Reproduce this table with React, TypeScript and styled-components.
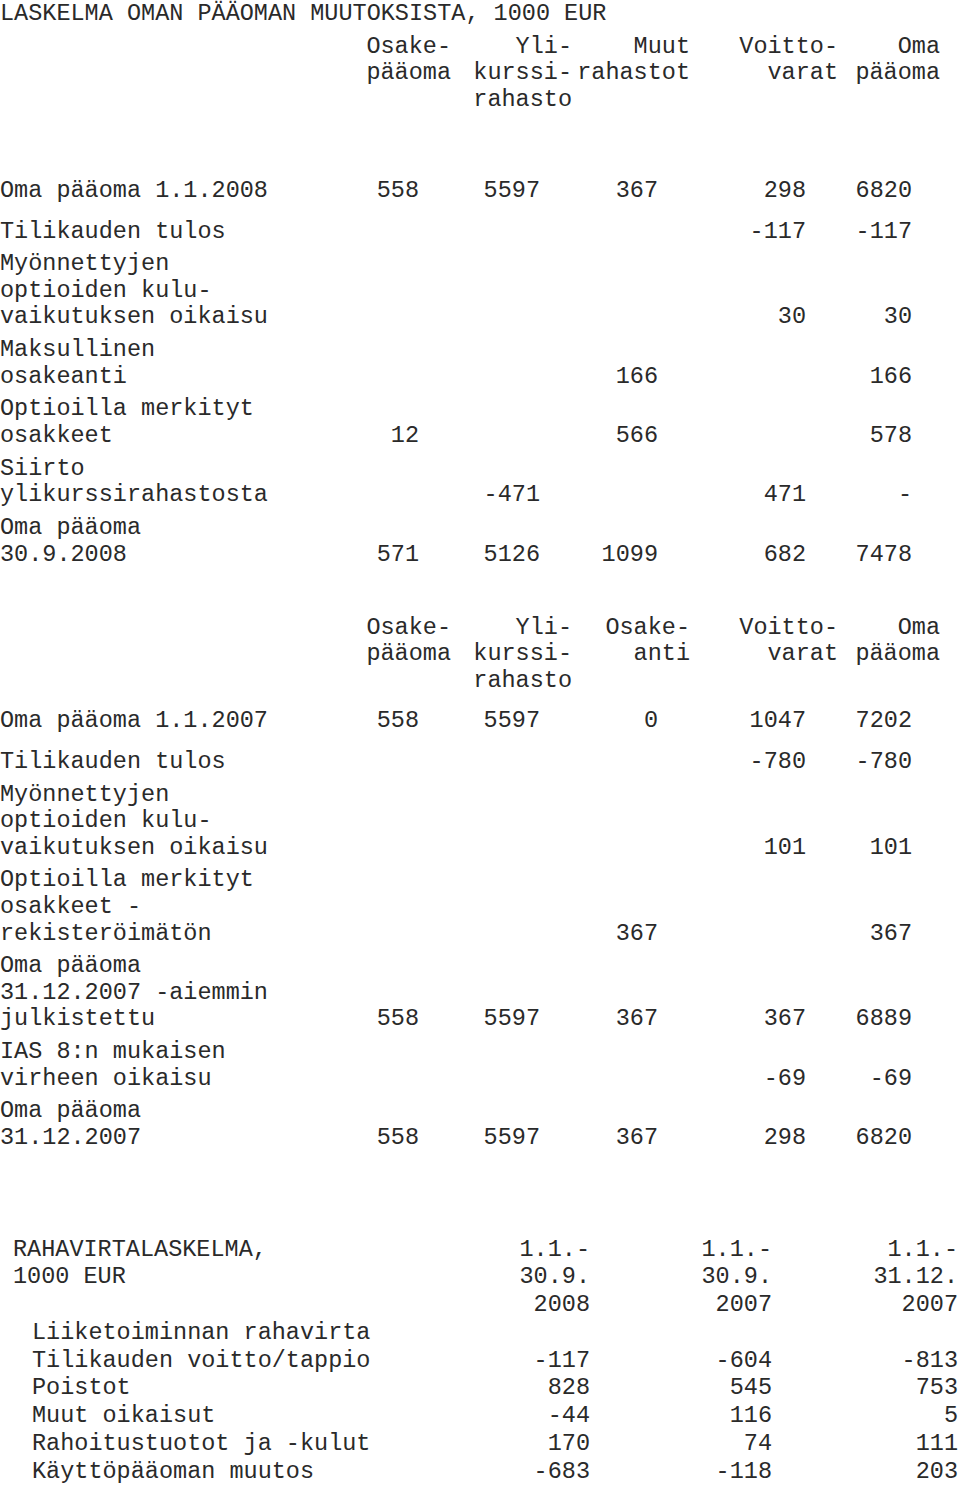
import { FC } from "react";
import styled, { createGlobalStyle } from "styled-components";

interface EquityRow {
  label: string;
  values: string[];
}

interface CashRow {
  label: string;
  values: string[];
}

const headers2008 = ["Osake-\npääoma", "Yli-\nkurssi-\nrahasto", "Muut\nrahastot", "Voitto-\nvarat", "Oma\npääoma"];
const headers2007 = ["Osake-\npääoma", "Yli-\nkurssi-\nrahasto", "Osake-\nanti", "Voitto-\nvarat", "Oma\npääoma"];

const rows2008: EquityRow[] = [
  { label: "Oma pääoma 1.1.2008", values: ["558", "5597", "367", "298", "6820"] },
  { label: "Tilikauden tulos", values: ["", "", "", "-117", "-117"] },
  { label: "Myönnettyjen\noptioiden kulu-\nvaikutuksen oikaisu", values: ["", "", "", "30", "30"] },
  { label: "Maksullinen\nosakeanti", values: ["", "", "166", "", "166"] },
  { label: "Optioilla merkityt\nosakkeet", values: ["12", "", "566", "", "578"] },
  { label: "Siirto\nylikurssirahastosta", values: ["", "-471", "", "471", "-"] },
  { label: "Oma pääoma\n30.9.2008", values: ["571", "5126", "1099", "682", "7478"] },
];

const rows2007: EquityRow[] = [
  { label: "Oma pääoma 1.1.2007", values: ["558", "5597", "0", "1047", "7202"] },
  { label: "Tilikauden tulos", values: ["", "", "", "-780", "-780"] },
  { label: "Myönnettyjen\noptioiden kulu-\nvaikutuksen oikaisu", values: ["", "", "", "101", "101"] },
  { label: "Optioilla merkityt\nosakkeet -\nrekisteröimätön", values: ["", "", "367", "", "367"] },
  { label: "Oma pääoma\n31.12.2007 -aiemmin\njulkistettu", values: ["558", "5597", "367", "367", "6889"] },
  { label: "IAS 8:n mukaisen\nvirheen oikaisu", values: ["", "", "", "-69", "-69"] },
  { label: "Oma pääoma\n31.12.2007", values: ["558", "5597", "367", "298", "6820"] },
];

const cashHeaders = ["1.1.-\n30.9.\n2008", "1.1.-\n30.9.\n2007", "1.1.-\n31.12.\n2007"];

const cashRows: CashRow[] = [
  { label: "Liiketoiminnan rahavirta", values: ["", "", ""] },
  { label: "Tilikauden voitto/tappio", values: ["-117", "-604", "-813"] },
  { label: "Poistot", values: ["828", "545", "753"] },
  { label: "Muut oikaisut", values: ["-44", "116", "5"] },
  { label: "Rahoitustuotot ja -kulut", values: ["170", "74", "111"] },
  { label: "Käyttöpääoman muutos", values: ["-683", "-118", "203"] },
];

interface TableProps {
  headers: string[];
  rows: EquityRow[];
  top: number;
  lead: number;
}

const EquityTable: FC<TableProps> = ({ headers, rows, top, lead }) => (
  <Table $top={top}>
    <HeadRow>
      <span />
      {headers.map((h, i) => (
        <HeadCell key={i}>{h}</HeadCell>
      ))}
    </HeadRow>
    {rows.map((r, i) => (
      <DataRow key={i} $gap={i === 0 ? lead : i === 1 ? 14.4 : 6.1}>
        <Label>{r.label}</Label>
        {r.values.map((v, j) => (
          <Num key={j} $last={j === r.values.length - 1}>
            {v}
          </Num>
        ))}
      </DataRow>
    ))}
  </Table>
);

export default function App() {
  return (
    <>
      <GlobalStyle />
      <Page>
        <Title>LASKELMA OMAN PÄÄOMAN MUUTOKSISTA, 1000 EUR</Title>
        <EquityTable headers={headers2008} rows={rows2008} top={7.7} lead={64.4} />
        <EquityTable headers={headers2007} rows={rows2007} top={46.8} lead={13.4} />
        <CashTable>
          <CashHead>{"RAHAVIRTALASKELMA,\n1000 EUR"}</CashHead>
          {cashHeaders.map((h, i) => (
            <CashNum key={i}>{h}</CashNum>
          ))}
          {cashRows.map((r, i) => (
            <CashLine key={i}>
              <CashLabel>{r.label}</CashLabel>
              {r.values.map((v, j) => (
                <CashNum key={j}>{v}</CashNum>
              ))}
            </CashLine>
          ))}
        </CashTable>
      </Page>
    </>
  );
}

const GlobalStyle = createGlobalStyle`
  html, body {
    margin: 0;
    padding: 0;
    background: #ffffff;
  }
  body {
    font-family: "Liberation Mono", "Courier New", monospace;
    font-size: 23.5px;
    color: #2a2a2a;
  }
`;

const Page = styled.div`
  width: 960px;
  padding-top: 2px;
  display: flex;
  flex-direction: column;
`;

const Title = styled.div`
  line-height: 24px;
  white-space: pre;
`;

const Table = styled.div<{ $top: number }>`
  margin-top: ${({ $top }) => $top}px;
  display: flex;
  flex-direction: column;
  width: 940px;
`;

const cols = "366px 85px 121px 118px 148px 102px";

const HeadRow = styled.div`
  display: grid;
  grid-template-columns: ${cols};
  align-items: start;
  line-height: 26.5px;
`;

const HeadCell = styled.div`
  text-align: right;
  white-space: pre;
`;

const DataRow = styled.div<{ $gap: number }>`
  display: grid;
  grid-template-columns: ${cols};
  align-items: end;
  line-height: 26.6px;
  margin-top: ${({ $gap }) => $gap}px;
`;

const Label = styled.div`
  white-space: pre;
`;

const Num = styled.div<{ $last: boolean }>`
  text-align: right;
  white-space: pre;
  padding-right: ${({ $last }) => ($last ? "28px" : "32px")};
`;

const CashTable = styled.div`
  margin-top: 84px;
  display: grid;
  grid-template-columns: 420px 170px 182px 186px;
  line-height: 27.75px;
  width: 958px;
`;

const CashHead = styled.div`
  white-space: pre;
  padding-left: 13px;
`;

const CashLine = styled.div`
  display: contents;
`;

const CashLabel = styled.div`
  white-space: pre;
  padding-left: 32px;
`;

const CashNum = styled.div`
  text-align: right;
  white-space: pre;
`;
